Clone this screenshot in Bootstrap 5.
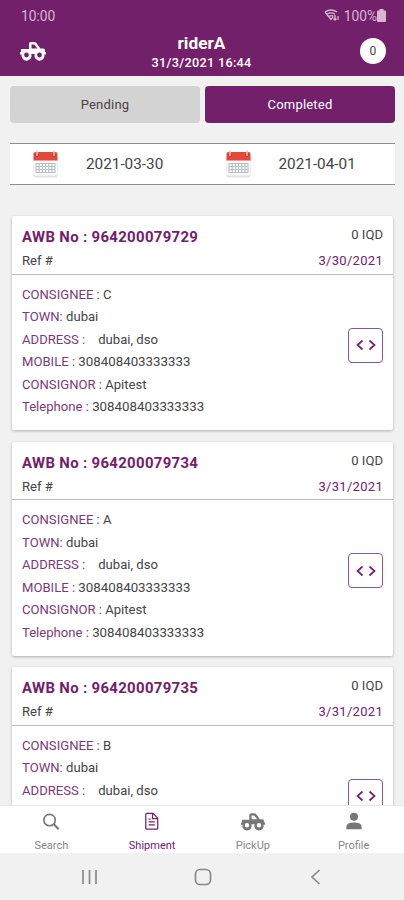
<!DOCTYPE html>
<html lang="en">
<head>
<meta charset="utf-8">
<meta name="viewport" content="width=device-width, initial-scale=1">
<title>riderA</title>
<link href="https://cdn.jsdelivr.net/npm/bootstrap@5.3.0/dist/css/bootstrap.min.css" rel="stylesheet">
<style>
:root{--plum:#73206b}
body{font-family:Roboto,"Liberation Sans",sans-serif;background:#f1f1f1;color:#444;font-size:13.1px;line-height:1.2;height:900px;overflow:hidden}
.plum{color:var(--plum)}
.topbar{background:var(--plum);height:76px;color:#fff;flex:none}
.status{height:32px;padding:0 18px 0 21px;font-size:13.8px;color:#d9b4d6}
.heading{height:44px;padding:1px 18px 0 20px}
.heading h1{font-size:17.3px;line-height:20px}
.title-block{padding-right:3px}
.stamp{font-size:12.7px;line-height:19px;letter-spacing:.3px}
.count{width:26px;height:26px;font-size:12px;color:#444;margin-top:5px}
.tabs{padding:10px 9px 0 10px;gap:5px;flex:none}
.tabs .btn{height:37px;font-size:13px;border:0;border-radius:4px;padding:0;letter-spacing:.2px}
.btn-wait,.btn-wait:hover{background:#d3d3d3;color:#444}
.btn-done,.btn-done:hover{background:var(--plum);color:#fff}
.dates{margin:20px 9px 0 10px;height:42px;flex:none;border-top:1px solid #8f8f8f;border-bottom:1px solid #8f8f8f;font-size:15.3px}
.dates svg{margin-left:23px;margin-right:28px}
.feed{padding:31px 11px 0 12px;gap:11.5px;min-height:0;overflow:hidden}
.parcel{height:214px;flex:none;border:0;border-radius:2px;box-shadow:0 1px 3px rgba(0,0,0,.28)}
.parcel-top{height:58.5px;border-bottom:1px solid #bdbdbd;padding:9px 10px 0}
.awb{font-size:14.9px;line-height:24px;letter-spacing:.35px}
.amount{margin-top:2px}
.ref{line-height:24px}
.due{font-size:13px;letter-spacing:.3px}
.info{padding:9px 10px 0;line-height:22.6px}
.info b{font-weight:400;color:#7c3a76}
.num{font-size:13.3px}
.code{width:35px;height:35px;border:1px solid #8f5489;border-radius:4px;margin-top:44px}
.tabbar{height:48px;flex:none;font-size:11px;color:#888;border-top:1px solid #e8e8e8;line-height:14px;z-index:1;padding-left:1px}
.tabbar a{color:inherit;padding-top:5px;gap:7px}
.tabbar .on{color:var(--plum)}
.sysbar{height:47px;flex:none;color:#8a8a8a;padding:0 79px 0 81px}
</style>
<script src="https://cdn.jsdelivr.net/npm/bootstrap@5.3.0/dist/js/bootstrap.bundle.min.js"></script>
</head>
<body class="d-flex flex-column">
<svg class="d-none">
<symbol id="truck" viewBox="0 0 26 20"><path fill="currentColor" fill-rule="evenodd" d="M9 8V3Q9 1 11 1H14.3Q15.7 1 16.6 2.2L20.4 7.6H23Q25 7.6 25 9.6V11H26V13.4H24.3A5 5 0 1 1 14.8 13H11.2A5 5 0 1 1 1.7 13.4H0V11H1V9Q1 8 2 8ZM11.5 3.4V7.6H17.4L14.6 3.7Q14.4 3.4 14 3.4ZM6.5 11.6A2.4 2.4 0 1 0 6.5 16.4A2.4 2.4 0 1 0 6.5 11.6ZM19.5 11.6A2.4 2.4 0 1 0 19.5 16.4A2.4 2.4 0 1 0 19.5 11.6Z"/></symbol>
<symbol id="cal" viewBox="0 0 25 28"><path fill="#dfe3e5" d="M.5 8h24v17.500q0 2-2 2h-20q-2 0-2-2z"/><path fill="#f7f8f8" d="M1 9h23v15q0 1.500-2 1.500H3q-2 0-2-1.500z"/><path fill="#e5473a" d="M.5 10.500V4q0-2 2-2h20q2 0 2 2v6.500z"/><path stroke="#b9bfc3" stroke-width="1" fill="none" d="M3 13.500h19M3 16.500h19M3 19.500h19M3 22.500h19M3 13v10M6.200 13v10M9.400 13v10M12.500 13v10M15.700 13v10M18.900 13v10M22 13v10"/><circle cx="4" cy="5" r="1.700" fill="#a92e25"/><circle cx="21" cy="5" r="1.700" fill="#a92e25"/><path stroke="#c9cdd0" stroke-width="1.600" stroke-linecap="round" d="M4 1v4.500M21 1v4.500"/></symbol>
<symbol id="angles" viewBox="0 0 20 12"><path fill="none" stroke="currentColor" stroke-width="1.700" d="M6.500 1.500L1.500 6l5 4.500M13.500 1.500l5 4.500-5 4.500"/></symbol>
</svg>

<header class="topbar">
  <div class="status d-flex justify-content-between align-items-center">
    <span>10:00</span>
    <span class="d-flex align-items-center">
      <svg class="me-1" width="16" height="13" viewBox="0 0 16 13" fill="none" stroke="currentColor" stroke-width="1.300"><path d="M1 3Q7 -1 13 3M3 5.200Q7 2.500 11 5.200M5 7.400Q7 6 9.500 7.400"/><path d="M1 3l6 7.500L9 8M11 6v5M9.500 9.500L11 11l1.500-1.500M14 11V7"/></svg>
      <span>100%</span>
      <svg width="9" height="13" viewBox="0 0 9 13"><path fill="currentColor" d="M2.500 0h4v1.500H8q1 0 1 1V12q0 1-1 1H1q-1 0-1-1V2.500q0-1 1-1h1.500z"/></svg>
    </span>
  </div>
  <div class="heading d-flex justify-content-between">
    <svg class="mt-2" width="26" height="20"><use href="#truck"/></svg>
    <div class="title-block text-center">
      <h1 class="fw-bold m-0">riderA</h1>
      <div class="stamp fw-medium">31/3/2021 16:44</div>
    </div>
    <span class="count bg-white rounded-circle d-flex align-items-center justify-content-center">0</span>
  </div>
</header>

<div class="tabs d-flex">
  <button class="btn btn-wait flex-fill w-50">Pending</button>
  <button class="btn btn-done flex-fill w-50">Completed</button>
</div>

<div class="dates d-flex align-items-center bg-white">
  <div class="w-50 d-flex align-items-center"><svg width="25" height="28"><use href="#cal"/></svg><span>2021-03-30</span></div>
  <div class="w-50 d-flex align-items-center"><svg width="25" height="28"><use href="#cal"/></svg><span>2021-04-01</span></div>
</div>

<main class="feed d-flex flex-column flex-grow-1">
  <article class="card parcel">
    <div class="parcel-top">
      <div class="d-flex justify-content-between"><span class="awb plum fw-bold">AWB No : 964200079729</span><span class="amount">0 IQD</span></div>
      <div class="d-flex justify-content-between align-items-center ref"><span>Ref #</span><span class="due plum">3/30/2021</span></div>
    </div>
    <div class="info d-flex justify-content-between">
      <div><div><b>CONSIGNEE :</b> C</div><div><b>TOWN:</b> dubai</div><div><b>ADDRESS :</b> &nbsp;&nbsp; dubai, dso</div><div><b>MOBILE :</b> <span class="num">308408403333333</span></div><div><b>CONSIGNOR :</b> Apitest</div><div><b>Telephone :</b> <span class="num">308408403333333</span></div></div>
      <span class="code plum d-flex align-items-center justify-content-center"><svg width="20" height="12"><use href="#angles"/></svg></span>
    </div>
  </article>
  <article class="card parcel">
    <div class="parcel-top">
      <div class="d-flex justify-content-between"><span class="awb plum fw-bold">AWB No : 964200079734</span><span class="amount">0 IQD</span></div>
      <div class="d-flex justify-content-between align-items-center ref"><span>Ref #</span><span class="due plum">3/31/2021</span></div>
    </div>
    <div class="info d-flex justify-content-between">
      <div><div><b>CONSIGNEE :</b> A</div><div><b>TOWN:</b> dubai</div><div><b>ADDRESS :</b> &nbsp;&nbsp; dubai, dso</div><div><b>MOBILE :</b> <span class="num">308408403333333</span></div><div><b>CONSIGNOR :</b> Apitest</div><div><b>Telephone :</b> <span class="num">308408403333333</span></div></div>
      <span class="code plum d-flex align-items-center justify-content-center"><svg width="20" height="12"><use href="#angles"/></svg></span>
    </div>
  </article>
  <article class="card parcel">
    <div class="parcel-top">
      <div class="d-flex justify-content-between"><span class="awb plum fw-bold">AWB No : 964200079735</span><span class="amount">0 IQD</span></div>
      <div class="d-flex justify-content-between align-items-center ref"><span>Ref #</span><span class="due plum">3/31/2021</span></div>
    </div>
    <div class="info d-flex justify-content-between">
      <div><div><b>CONSIGNEE :</b> B</div><div><b>TOWN:</b> dubai</div><div><b>ADDRESS :</b> &nbsp;&nbsp; dubai, dso</div></div>
      <span class="code plum d-flex align-items-center justify-content-center"><svg width="20" height="12"><use href="#angles"/></svg></span>
    </div>
  </article>
</main>

<nav class="tabbar d-flex bg-white">
  <a class="w-25 d-flex flex-column align-items-center text-decoration-none" href="#"><svg width="24" height="22" viewBox="0 0 24 22" fill="none" stroke="#777" stroke-width="1.700"><circle cx="10.500" cy="9.500" r="6"/><path stroke-width="2.200" d="M15 14l5 5"/></svg><span>Search</span></a>
  <a class="on w-25 d-flex flex-column align-items-center text-decoration-none" href="#"><svg width="24" height="22" viewBox="0 0 24 22" fill="none" stroke="currentColor" stroke-width="1.300"><path d="M6.500 2.500h6.500l5 5v10.500q0 1-1 1H6.500q-1 0-1-1V3.500q0-1 1-1z"/><path d="M12.500 3v5H18M8.500 8.500h2M8.500 11.500h6.500M8.500 14.500h6.500"/></svg><span>Shipment</span></a>
  <a class="w-25 d-flex flex-column align-items-center text-decoration-none" href="#"><svg width="24" height="22" style="color:#777"><use href="#truck"/></svg><span>PickUp</span></a>
  <a class="w-25 d-flex flex-column align-items-center text-decoration-none" href="#"><svg width="24" height="22" viewBox="0 0 24 22" fill="#777"><circle cx="12" cy="6" r="4.200"/><path d="M4 19v-2.500q0-4.500 8-4.500t8 4.500V19z"/></svg><span>Profile</span></a>
</nav>
<div class="sysbar d-flex justify-content-between align-items-center">
  <svg width="18" height="18" viewBox="0 0 18 18" fill="none" stroke="currentColor" stroke-width="1.700"><path d="M2 2v14M8.500 2v14M15 2v14"/></svg>
  <svg width="18" height="18" viewBox="0 0 18 18" fill="none" stroke="currentColor" stroke-width="1.700"><rect x="1.500" y="1.500" width="15" height="15" rx="4.500"/></svg>
  <svg width="18" height="18" viewBox="0 0 18 18" fill="none" stroke="currentColor" stroke-width="1.700"><path d="M12.500 2L5 9l7.500 7"/></svg>
</div>
</body>
</html>
